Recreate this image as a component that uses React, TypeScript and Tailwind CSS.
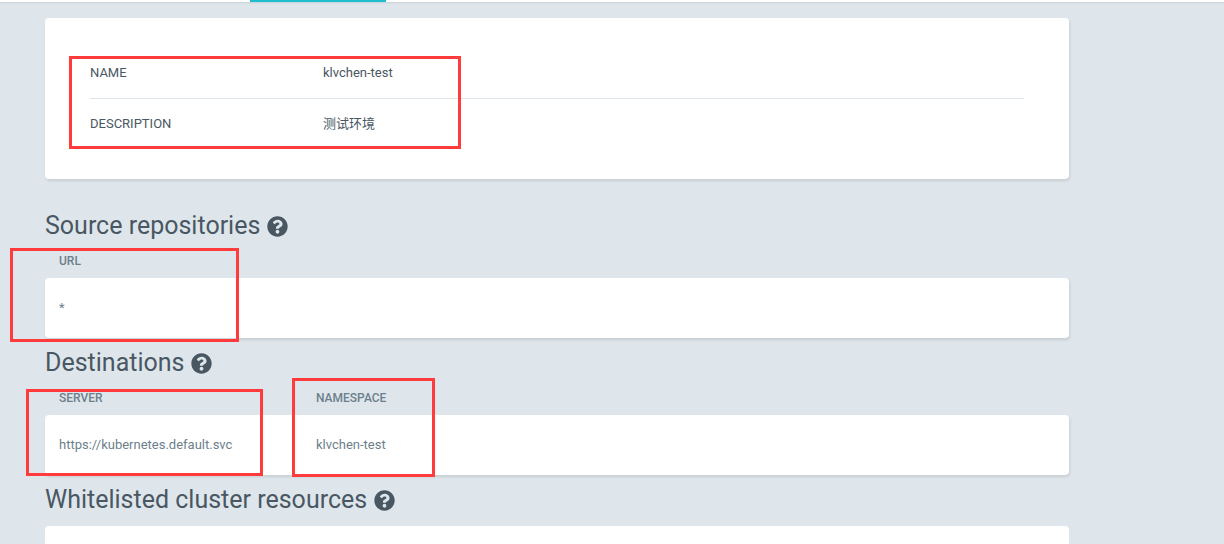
const font = { fontFamily: 'Roboto, "Noto Sans CJK SC", sans-serif' }

const QuestionIcon = () => (
  <svg viewBox="0 0 512 512" className="w-[21px] h-[21px] ml-[7px] fill-[#495763]">
    <path d="M504 256c0 136.997-111.043 248-248 248S8 392.997 8 256C8 119.083 119.043 8 256 8s248 111.083 248 248zM262.655 90c-54.497 0-89.255 22.957-116.549 63.758-3.536 5.286-2.353 12.415 2.715 16.258l34.699 26.31c5.205 3.947 12.621 3.008 16.665-2.122 17.864-22.658 30.113-35.797 57.303-35.797 20.429 0 45.698 13.148 45.698 32.958 0 14.976-12.363 22.667-32.534 33.976C247.128 238.528 216 254.941 216 296v4c0 6.627 5.373 12 12 12h56c6.627 0 12-5.373 12-12v-1.333c0-28.462 83.186-29.647 83.186-106.667 0-58.002-60.165-102-116.531-102zM256 338c-25.365 0-46 20.635-46 46 0 25.364 20.635 46 46 46s46-20.636 46-46c0-25.365-20.635-46-46-46z" />
  </svg>
)

const Heading = ({ title, className }: { title: string; className: string }) => (
  <div className={`flex items-center h-[28px] text-[25px] leading-[28px] text-[#495763] ${className}`}>
    {title}
    <QuestionIcon />
  </div>
)

const RedBox = ({ className }: { className: string }) => (
  <div className={`absolute border-[3px] border-[#ff3b3b] ${className}`} />
)

const ListCard = ({ cols }: { cols: { label: string; value: string; width: string }[] }) => (
  <div>
    <div className="flex h-[38px] items-center pl-[14px] pt-[4px] text-[12px] font-medium text-[#6d7f8b]">
      {cols.map(c => <div key={c.label} className={c.width}>{c.label}</div>)}
    </div>
    <div className="flex items-center h-[60px] pl-[14px] bg-white rounded-[4px] shadow-[1px_2px_3px_rgba(0,0,0,0.1)] text-[13px] text-[#6d7f8b]">
      {cols.map(c => <div key={c.label} className={c.width}>{c.value}</div>)}
    </div>
  </div>
)

export default function App() {
  return (
    <div className="relative h-[544px] overflow-hidden bg-[#dee6eb]" style={font}>
      <div className="h-[2px] bg-white shadow-[0_1px_2px_rgba(0,0,0,0.1)] pl-[250px]">
        <div className="w-[136px] h-[2px] bg-[#1fbdd0]" />
      </div>

      <div className="w-[1024px] ml-[45px]">
        <div className="mt-[16px] bg-white rounded-[4px] shadow-[1px_2px_3px_rgba(0,0,0,0.1)] py-[30px] px-[45px] text-[13px] text-[#495763]">
          <div className="flex items-center h-[51px] pb-[1px] border-b border-[#dee6eb]">
            <div className="w-[233px]">NAME</div>
            <div>klvchen-test</div>
          </div>
          <div className="flex items-center h-[50px]">
            <div className="w-[233px]">DESCRIPTION</div>
            <div>测试环境</div>
          </div>
        </div>

        <Heading title="Source repositories" className="mt-[33px]" />
        <ListCard cols={[{ label: 'URL', value: '*', width: 'w-[200px]' }]} />

        <Heading title="Destinations" className="mt-[11px]" />
        <ListCard cols={[
          { label: 'SERVER', value: 'https://kubernetes.default.svc', width: 'w-[257px]' },
          { label: 'NAMESPACE', value: 'klvchen-test', width: 'w-[200px]' },
        ]} />

        <Heading title="Whitelisted cluster resources" className="mt-[11px]" />
        <div className="mt-[12px] h-[60px] bg-white rounded-[4px]" />
      </div>

      <RedBox className="left-[69px] top-[56px] w-[392px] h-[93px]" />
      <RedBox className="left-[10px] top-[248px] w-[229px] h-[94px]" />
      <RedBox className="left-[26px] top-[389px] w-[237px] h-[87px]" />
      <RedBox className="left-[292px] top-[378px] w-[143px] h-[99px]" />
    </div>
  )
}
